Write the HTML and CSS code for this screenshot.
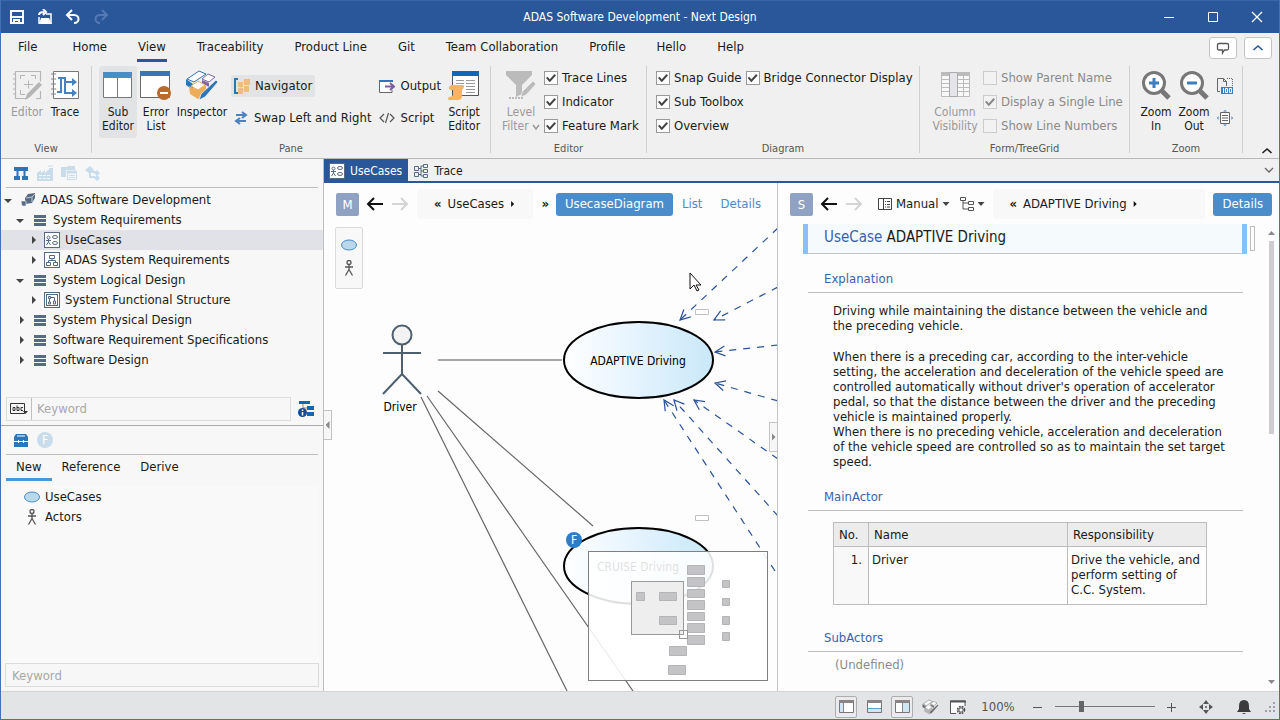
FILE: index.html
```html
<!DOCTYPE html>
<html lang="en">

<head>
    <meta charset="UTF-8">
    <title>ADAS Software Development - Next Design</title>
    <link rel="stylesheet" href="styles.css">
</head>

<body>
    <!-- shared icons -->
    <svg class="defs" width="0" height="0">
        <symbol id="i-layer" viewBox="0 0 16 16"><path d="M2 3h12v3H2zM2 7h12v3H2zM2 11h12v3H2z" fill="#566a84"/></symbol>
        <symbol id="i-usecase" viewBox="0 0 16 16"><rect x=".5" y=".5" width="15" height="15" fill="#fff" stroke="#566a84"/><circle cx="4.500" cy="5.500" r="1.500"/><path d="M2 8.500h5M4.500 7v3M2.500 13l2-3 2 3"/><ellipse cx="11" cy="5" rx="2.500" ry="1.500"/><ellipse cx="11" cy="11" rx="2.500" ry="1.500"/></symbol>
        <symbol id="i-org" viewBox="0 0 16 16"><rect x=".5" y=".5" width="15" height="15" fill="#fff" stroke="#566a84"/><path d="M5.500 3.500h5v3h-5zM2.500 10.500h4v3h-4zM9.500 10.500h4v3h-4zM8 6.500v2M4.500 10.500v-2h7v2"/></symbol>
        <symbol id="i-struct" viewBox="0 0 16 16"><rect x=".5" y=".5" width="15" height="15" fill="#fff" stroke="#566a84"/><rect x="2.500" y="2.500" width="11" height="11"/><path d="M4.500 4.500h2v2h-2zM4.500 10h2v2h-2zM9.500 9h2v3h-2zM5.500 6.500V10M6.500 5.500h4V9"/></symbol>
        <symbol id="i-actor" viewBox="0 0 16 16"><circle cx="8" cy="2.500" r="2"/><path d="M8 4.500v5M4 7h8M4.500 15.500L8 9.500l3.500 6"/></symbol>
        <symbol id="i-oval" viewBox="0 0 16 16"><ellipse cx="8" cy="8" rx="7.500" ry="5" fill="#b9d9eb" stroke="#4a8bc8"/></symbol>
        <symbol id="i-back" viewBox="0 0 18 14"><path d="M17 7H2M8 1L2 7l6 6" stroke-width="2"/></symbol>
        <symbol id="i-fwd" viewBox="0 0 18 14"><path d="M1 7h15M10 1l6 6-6 6" stroke-width="2"/></symbol>
        <symbol id="i-inspect" viewBox="0 0 32 32">
            <path d="M0 10v6l7 5v-6z" fill="#2e75b6"/>
            <path d="M1 10L13 2l7 3L8 13z" fill="#fff" stroke="#2e75b6"/>
            <path d="M16 10l6-5 7 3-6 5z" fill="#fff" stroke="#8064a2"/><path d="M16 11l7 3v4l-7-4z" fill="#8064a2"/>
            <path d="M3 17l9 4v9l-8-5zM12 21l8-5v8l-8 6z" fill="#edac57"/><path d="M5 17l7-5 7 4-7 5z" fill="#fff" stroke="#edac57"/>
            <path d="M30 11l2 2-13 15-6 3 2-6z" fill="#2e75b6" stroke="#f0f0f0" stroke-width=".8"/>
        </symbol>
    </svg>

    <header class="titlebar">
        <div class="quick">
            <button aria-label="Save"><svg width="16" height="16" fill="none" stroke="#fff" stroke-width="2"><path d="M2 2h12v12H2zM3 8h10M5 14v-3h5v3"/></svg></button>
            <button aria-label="Open"><svg width="16" height="16"><path d="M2 8v6h12V5H9" fill="none" stroke="#fff" stroke-width="1.500"/><path d="M4 9h8l3 6H2z" fill="#fff"/><path d="M2 6c0-2 2-3 5-3M6 0l3 3-3 3" fill="none" stroke="#fff" stroke-width="2"/></svg></button>
            <button aria-label="Undo"><svg width="16" height="16" fill="none" stroke="#fff" stroke-width="2"><path d="M7 1L2 6l5 5M2 6h7c6 0 6 8 0 8"/></svg></button>
            <button aria-label="Redo" disabled><svg width="16" height="16" fill="none" stroke="#5579b5" stroke-width="2"><path d="M9 1l5 5-5 5M14 6H7C1 6 1 14 7 14"/></svg></button>
        </div>
        <h1>ADAS Software Development - Next Design</h1>
        <div class="window-buttons">
            <button aria-label="Minimize"><svg width="12" height="12"><path d="M1 6.500h10" stroke="#fff"/></svg></button>
            <button aria-label="Maximize"><svg width="12" height="12"><path d="M1.500 1.500h9v9h-9z" fill="none" stroke="#fff"/></svg></button>
            <button aria-label="Close"><svg width="12" height="12"><path d="M1 1l10 10M11 1L1 11" stroke="#fff" stroke-width="1.300"/></svg></button>
        </div>
    </header>

    <nav class="menu">
        <a href="#">File</a>
        <a href="#">Home</a>
        <a href="#" class="on">View</a>
        <a href="#">Traceability</a>
        <a href="#">Product Line</a>
        <a href="#">Git</a>
        <a href="#">Team Collaboration</a>
        <a href="#">Profile</a>
        <a href="#">Hello</a>
        <a href="#">Help</a>
        <div class="menu-tools">
            <button aria-label="Feedback"><svg width="14" height="14" fill="none" stroke="#555" stroke-width="1.300"><path d="M3 2.500h8q1.500 0 1.500 1.500v3.500q0 1.500-1.500 1.500H8.500L6.500 12V9H3Q1.500 9 1.500 7.500V4q0-1.500 1.500-1.500z"/></svg></button>
            <button aria-label="Hide ribbon"><svg width="12" height="12" fill="none" stroke="#2a579a" stroke-width="1.600"><path d="M1.500 8L6 4l4.500 4"/></svg></button>
        </div>
    </nav>

    <div class="ribbon">
        <section class="group">
            <div class="tools">
                <button class="big" disabled>
                    <svg width="32" height="32" viewBox="1 0 32 32" fill="none" stroke="#b5b5b5">
                        <path d="M5.500 2.500h25v10M5.500 2.500v27h12M30.500 22v7.500H26" stroke-width="1.200"/><path d="M3 5h4M3 10h4M3 15h4M3 20h4M3 25h4" stroke-dasharray="3 1"/>
                        <path d="M10.500 10V6.500H15M21 6.500h4.500V10M10.500 21v4.500H15M18.500 11.500v8M14 15.500h9"/>
                        <path d="M29 13l3 3-12 12-5 3 2-6z" fill="#b5b5b5" stroke="none"/>
                    </svg>
                    Editor
                </button>
                <button class="big">
                    <svg width="32" height="32" viewBox="1 0 32 32" fill="none">
                        <path d="M5.500 2.500h25v27h-25z" fill="#fff" stroke="#777"/><path d="M3 5h5M3 10h5M3 15h5M3 20h5M3 25h5" stroke="#888"/>
                        <path d="M10 9h7v15h11M9 23h4V9M17 13h11" stroke="#4682c0" stroke-width="2"/>
                        <path d="M24 9l5 4-5 4zM24 20l5 4-5 4z" fill="#4682c0"/>
                    </svg>
                    Trace
                </button>
            </div>
            <h2>View</h2>
        </section>

        <section class="group pane">
            <div class="tools">
                <button class="big on">
                    <svg width="32" height="32"><path d="M1.500 5.500h28v23h-28z" fill="#fff" stroke="#777"/><path d="M15.500 8v20" stroke="#777"/><path d="M1 3h29v6H1z" fill="#4a8bc8"/></svg>
                    Sub<br>Editor
                </button>
                <button class="big">
                    <svg width="32" height="32"><path d="M.5 2.500h29v26H.5z" fill="#fff" stroke="#666"/><path d="M0 2h30v5H0z" fill="#3a74b4"/><circle cx="24" cy="24" r="7" fill="#b96a2d"/><path d="M20 24h8" stroke="#fff" stroke-width="2"/></svg>
                    Error<br>List
                </button>
                <button class="big wide">
                    <svg width="34" height="32"><use href="#i-inspect" width="34" height="32"/></svg>
                    Inspector
                </button>
                <div class="rows">
                    <button class="small on"><svg width="17" height="16"><path d="M5 1H2v14h3" fill="none" stroke="#2e75b6" stroke-width="2"/><path d="M11 1h6v6h-6zM5 4h5v5H5zM11 8h5v6h-5zM5 10h5v6H5z" fill="#ebbf80"/><path d="M10 4h2M8 9v3h3" fill="none" stroke="#ebbf80"/></svg>Navigator</button>
                    <button class="small"><svg width="16" height="16" fill="none" stroke="#4a82c0" stroke-width="2"><path d="M3 5h10M9 2l4 3-4 3M13 11H3M7 8l-4 3 4 3"/></svg>Swap Left and Right</button>
                </div>
                <div class="rows">
                    <button class="small"><svg width="16" height="16" fill="none"><path d="M13 4V2.500H.5v12H13V12" fill="#fff" stroke="#666"/><path d="M0 3h14" stroke="#2e75b6" stroke-width="2"/><path d="M6 8.500h8M11 5l4 3.500-4 3.500" stroke="#7b5fa3" stroke-width="2"/></svg>Output</button>
                    <button class="small"><svg width="16" height="16" fill="none" stroke="#555" stroke-width="1.200"><path d="M5 4L1 8l4 4M11 4l4 4-4 4M9.500 3l-3 10"/></svg>Script</button>
                </div>
                <button class="big">
                    <svg width="32" height="32"><path d="M4.500 2.500h26v24h-26z" fill="#fff" stroke="#555"/><path d="M4 2h27v5H4z" fill="#0f67b5"/><path d="M8 11.500h8M8 14.500h8M8 17.500h8M18 11.500h9M18 14.500h9M18 17.500h9M18 20.500h9M18 23.500h9" stroke="#999"/><path d="M3 16h12q2 3-1 5v6q0 4-4 4H1q-2-2 0-3l4-1v-6q-5 0-4-3z" fill="#fbb45c"/></svg>
                    Script<br>Editor
                </button>
            </div>
            <h2>Pane</h2>
        </section>

        <section class="group filter">
            <div class="tools">
                <button class="big" disabled>
                    <svg width="32" height="32"><path d="M1 2h26v4L17 16v9l-6 3V16L1 6z" fill="#bbb"/><path d="M28 12l3 3-10 11-5 2 1-5z" fill="#bbb" stroke="#f0f0f0" stroke-width=".7"/><path d="M4 29h14" stroke="#bbb" stroke-width="2" stroke-dasharray="2 1"/></svg>
                    Level<br><span>Filter <svg width="8" height="6" fill="none" stroke="#999" stroke-width="1.500"><path d="M1 1l3 4 3-4"/></svg></span>
                </button>
                <div class="checks">
                    <label><input type="checkbox" checked>Trace Lines</label>
                    <label><input type="checkbox" checked>Indicator</label>
                    <label><input type="checkbox" checked>Feature Mark</label>
                </div>
            </div>
            <h2>Editor</h2>
        </section>

        <section class="group diagram">
            <div class="tools">
                <div class="checks">
                    <label><input type="checkbox" checked>Snap Guide</label>
                    <label><input type="checkbox" checked>Sub Toolbox</label>
                    <label><input type="checkbox" checked>Overview</label>
                </div>
                <div class="checks">
                    <label><input type="checkbox" checked>Bridge Connector Display</label>
                </div>
            </div>
            <h2>Diagram</h2>
        </section>

        <section class="group form">
            <div class="tools">
                <button class="big wide" disabled>
                    <svg width="32" height="32" fill="none" stroke="#bbb"><path d="M2.500 3.500h28v24h-28z" fill="#f8f8f8"/><path d="M2 5h29" stroke-width="4"/><path d="M2 10.500h29M2 14.500h29M2 18.500h29M2 22.500h29"/><path d="M10.500 3.500h8v24h-8z" fill="#e4e4ea" stroke="#aaa"/><path d="M24.500 4v23"/></svg>
                    Column<br>Visibility
                </button>
                <div class="checks">
                    <label class="off"><input type="checkbox" disabled>Show Parent Name</label>
                    <label class="off"><input type="checkbox" checked disabled>Display a Single Line</label>
                    <label class="off"><input type="checkbox" disabled>Show Line Numbers</label>
                </div>
            </div>
            <h2>Form/TreeGrid</h2>
        </section>

        <section class="group zoom">
            <div class="tools">
                <button class="big">
                    <svg width="32" height="32" fill="none" stroke="#777"><circle cx="14" cy="14" r="10.500" fill="#fff" stroke-width="3"/><path d="M22 22l7 7" stroke-width="5"/><path d="M9 14h10M14 9v10" stroke="#3c7ebf" stroke-width="3"/></svg>
                    Zoom<br>In
                </button>
                <button class="big">
                    <svg width="32" height="32" fill="none" stroke="#777"><circle cx="14" cy="14" r="10.500" fill="#fff" stroke-width="3"/><path d="M22 22l7 7" stroke-width="5"/><path d="M9 14h10" stroke="#3c7ebf" stroke-width="3"/></svg>
                    Zoom<br>Out
                </button>
                <div class="rows">
                    <button class="small" aria-label="Zoom 100%"><svg width="16" height="16" fill="none" stroke="#666"><path d="M3 13.500H.5V.5h6l3 3V8M6.500.5v3h3"/><path d="M10 .5h5.500V9" stroke-dasharray="1 1"/><path d="M4 9h12v7H4z" fill="#3c7ebf" stroke="none"/><path d="M6.500 10v5M8.500 10.500h2v4h-2zM12.500 10.500h2v4h-2z" stroke="#fff"/></svg></button>
                    <button class="small" aria-label="Fit to window"><svg width="16" height="16" fill="none" stroke="#666"><path d="M3.500 2.500h9v11h-9z" fill="#fff"/><path d="M5 5.500h6M5 8h6M5 10.500h6"/><path d="M6 1.500L8 0l2 1.500zM6 14.500L8 16l2-1.500zM1.500 6L0 8l1.500 2zM14.500 6L16 8l-1.500 2z" fill="#3c7ebf" stroke="none"/></svg></button>
                </div>
            </div>
            <h2>Zoom</h2>
        </section>
        <button class="collapse" aria-label="Collapse the ribbon"><svg width="12" height="8" fill="none" stroke="#222" stroke-width="1.600"><path d="M1.500 6L6 2l4.500 4"/></svg></button>
    </div>

    <div class="work">
        <aside class="sidebar">
            <div class="navigator">
                <div class="icon-bar">
                    <svg width="16" height="16" fill="#2e75b6"><path d="M1 2h14v4H1zM1 11h6v4H1zM9 11h6v4H9z"/><path d="M4.500 5v7M11.500 5v7" stroke="#2e75b6" stroke-width="2"/></svg>
                    <svg width="16" height="16" fill="#c9dcea"><path d="M0 8l4-3v3l4-3v3l3-3h1V3h4v13H0z"/><path d="M11 1h5" stroke="#c9dcea"/><path d="M2 10.500h12M2 13.500h12" stroke="#f7f7f7" stroke-dasharray="3 1"/></svg>
                    <svg width="16" height="16" fill="#c9dcea"><path d="M0 2h6l1-1h7v4H5v7H0z"/><path d="M6.500 6.500h9v8h-9z" fill="#f7f7f7" stroke="#c9dcea"/><path d="M6 6h10v2H6zM8 10.500h6M8 12.500h6" stroke="#c9dcea"/></svg>
                    <svg width="16" height="16" fill="#c9dcea"><path d="M5 1l4 4-4 4-5-4zM12 5l3 3-3 3-3-3zM12 10l3 3-3 3-3-3z"/><path d="M5 8v4h5M7 7h4" fill="none" stroke="#c9dcea" stroke-width="2"/></svg>
                </div>
                <ul class="tree">
                    <li class="open"><i></i><svg width="16" height="16" fill="#566a84"><path d="M5 6l3-4 7-1v5l-3 5-7 1z"/><path d="M1 9h5v5H2z" stroke="#f7f7f7" stroke-width=".6"/><path d="M6 6l6-1 3-3M12 5v5" stroke="#c5ccd6" fill="none"/></svg>ADAS Software Development</li>
                    <li class="l1 open"><i></i><svg width="16" height="16"><use href="#i-layer"/></svg>System Requirements</li>
                    <li class="l2 selected"><i></i><svg class="line" width="16" height="16"><use href="#i-usecase"/></svg>UseCases</li>
                    <li class="l2"><i></i><svg class="line" width="16" height="16"><use href="#i-org"/></svg>ADAS System Requirements</li>
                    <li class="l1 open"><i></i><svg width="16" height="16"><use href="#i-layer"/></svg>System Logical Design</li>
                    <li class="l2"><i></i><svg class="line" width="16" height="16"><use href="#i-struct"/></svg>System Functional Structure</li>
                    <li class="l1"><i></i><svg width="16" height="16"><use href="#i-layer"/></svg>System Physical Design</li>
                    <li class="l1"><i></i><svg width="16" height="16"><use href="#i-layer"/></svg>Software Requirement Specifications</li>
                    <li class="l1"><i></i><svg width="16" height="16"><use href="#i-layer"/></svg>Software Design</li>
                </ul>
                <div class="search">
                    <div class="field">
                        <button aria-label="Search options"><svg width="18" height="12" fill="none" stroke="#333"><path d="M.5.500h14v10H.5z"/><path d="M3 4.500h2v3H3zM7 2.500v5h2v-3H7M13 4.500h-2v3h2"/><path d="M13 8h5l-2.500 3z" fill="#333" stroke="none"/></svg></button>
                        <input type="text" placeholder="Keyword" aria-label="Keyword in models">
                    </div>
                    <button aria-label="Show details"><svg width="16" height="16"><path d="M1 0h11v3H1zM9 5h7v4H9zM9 11h7v4H9z" fill="#0f67b5"/><path d="M5 3v4h4" stroke="#888" fill="none"/><circle cx="4.500" cy="11.500" r="4.500" fill="#134b96"/><path d="M4.500 8.500v1.500M4.500 11v3.500" stroke="#fff" stroke-width="1.500"/></svg></button>
                </div>
            </div>
            <div class="toolbox">
                <div class="icon-bar">
                    <svg width="16" height="16"><path d="M3 2h10l2 3v10H1V5z" fill="#2e75b6"/><path d="M4 4h8M1 9.500h4M6 9.500h4M11 9.500h4M5.500 8v3M10.500 8v3" stroke="#fff"/></svg>
                    <span class="feature pale">F</span>
                </div>
                <nav class="tabs"><a href="#" class="on">New</a><a href="#">Reference</a><a href="#">Derive</a></nav>
                <ul class="items">
                    <li><svg width="16" height="16"><use href="#i-oval"/></svg>UseCases</li>
                    <li><svg class="man" width="16" height="16"><use href="#i-actor"/></svg>Actors</li>
                </ul>
                <input class="filter-box" type="text" placeholder="Keyword" aria-label="Keyword in toolbox">
            </div>
        </aside>

        <main class="editor">
            <div class="doc-tabs">
                <a href="#" class="on"><svg class="line" width="16" height="16"><use href="#i-usecase"/></svg>UseCases</a>
                <a href="#"><svg class="line" width="16" height="16"><path d="M1.500 3.500h4v4h-4zM1.500 9.500h4v4h-4zM10.500 1.500h4v3h-4zM10.500 6.500h4v3h-4zM10.500 11.500h4v3h-4zM5.500 5.500H8M5.500 11.500H8M10.500 3H8v10h2.500M8 8h2.500"/></svg>Trace</a>
                <button aria-label="All tabs"><svg width="10" height="8" fill="none" stroke="#666" stroke-width="1.300"><path d="M1 2l4 4 4-4"/></svg></button>
            </div>
            <div class="panes">
                <section class="main-pane">
                    <div class="bar">
                        <span class="badge">M</span>
                        <button aria-label="Back"><svg class="go" width="18" height="14"><use href="#i-back"/></svg></button>
                        <button aria-label="Forward" disabled><svg class="go no" width="18" height="14"><use href="#i-fwd"/></svg></button>
                        <div class="crumb"><b>«</b>UseCases<b class="tri"></b></div>
                        <b>»</b>
                        <div class="views">
                            <button class="primary">UsecaseDiagram</button>
                            <button class="link">List</button>
                            <button class="link">Details</button>
                        </div>
                    </div>
                    <div class="canvas">
                        <svg class="diagram-svg" width="100%" height="100%">
                            <defs>
                                <linearGradient id="fill"><stop offset="0" stop-color="#fff"/><stop offset=".5" stop-color="#e4f3fe"/><stop offset="1" stop-color="#c9e8f8"/></linearGradient>
                                <marker id="arrow" markerUnits="userSpaceOnUse" markerWidth="14" markerHeight="14" refX="12" refY="7" orient="auto"><path d="M2 2l10 5-10 5" fill="none" stroke="#2a5298" stroke-width="1.200"/></marker>
                            </defs>
                            <g class="assoc">
                                <path d="M114 138h124" class="soft"/>
                                <path d="M114 169l155 135M103 174l206 295M97 175l146 294"/>
                            </g>
                            <g class="trace">
                                <path d="M454 6L356 98"/>
                                <path d="M454 65l-64 33"/>
                                <path d="M454 123l-63 7"/>
                                <path d="M454 179l-63-18"/>
                                <path d="M454 237l-84-59"/>
                                <path d="M454 294L350 178"/>
                                <path d="M451 349L340 178"/>
                            </g>
                            <g class="driver">
                                <circle cx="78" cy="113" r="9.500"/>
                                <path d="M78 123v29M59 131h38M59 172l19-20 19 20"/>
                            </g>
                            <text x="76" y="189">Driver</text>
                            <ellipse cx="314.500" cy="138" rx="74.500" ry="38"/>
                            <text x="314" y="143">ADAPTIVE Driving</text>
                            <ellipse cx="314.500" cy="344" rx="74.500" ry="38"/>
                            <text x="314" y="349">CRUISE Driving</text>
                            <path class="stub" d="M371.500 87.500h13v5h-13zM371.500 293.500h13v5h-13z"/>
                        </svg>
                        <div class="palette">
                            <svg width="16" height="16"><use href="#i-oval"/></svg>
                            <svg class="man" width="16" height="16"><use href="#i-actor"/></svg>
                        </div>
                        <span class="feature mark">F</span>
                        <svg class="overview" viewBox="1 1 178 128">
                            <rect x="43.500" y="30.500" width="52" height="53" fill="#eee" stroke="#999"/>
                            <g class="blocks">
                                <path d="M48.500 41.500h8v8h-8zM71.500 41.500h17v8h-17zM71.500 65.500h17v8h-17z"/>
                                <path d="M99.500 14.500h17v9h-17zM99.500 26.500h17v9h-17zM99.500 38.500h17v8h-17zM99.500 49.500h17v9h-17zM99.500 61.500h17v8h-17zM99.500 72.500h17v9h-17zM99.500 84.500h17v9h-17z"/>
                                <path d="M81.500 95.500h17v9h-17zM80.500 114.500h17v9h-17z"/>
                                <path d="M134.500 29.500h7v7h-7zM134.500 47.500h7v7h-7zM134.500 65.500h7v8h-7zM134.500 81.500h7v8h-7z"/>
                            </g>
                            <rect x="91.500" y="79.500" width="8" height="8" fill="none" stroke="#999"/>
                        </svg>
                        <svg class="cursor" width="14" height="20"><path d="M1 1v16l4-4 3 6 2-1-3-5h5z" fill="#fff" stroke="#111"/></svg>
                    </div>
                    <button class="grip left" aria-label="Hide navigator"></button>
                    <button class="grip right" aria-label="Hide sub editor"></button>
                </section>

                <section class="sub-pane">
                    <div class="bar">
                        <span class="badge">S</span>
                        <button aria-label="Back"><svg class="go" width="18" height="14"><use href="#i-back"/></svg></button>
                        <button aria-label="Forward" disabled><svg class="go no" width="18" height="14"><use href="#i-fwd"/></svg></button>
                        <button class="drop manual"><svg width="14" height="14" fill="none" stroke="#444"><path d="M.5 1.500h13v11H.5zM5.500 1.500v11M7 4.500h1M9 4.500h3M7 7.500h1M9 7.500h3M7 10h1M9 10h3"/></svg>Manual<i></i></button>
                        <button class="drop" aria-label="Layout"><svg width="14" height="14" fill="none" stroke="#555"><path d="M.5.500h5v3h-5zM8.500 4.500h5v3h-5zM8.500 10.500h5v3h-5zM3 3.500v8.500h5.500M3 6h5.500"/></svg><i></i></button>
                        <div class="crumb"><b>«</b>ADAPTIVE Driving<b class="tri"></b></div>
                        <button class="primary">Details</button>
                    </div>
                    <div class="scroll">
                        <article class="form-view">
                            <h2><span>UseCase</span> ADAPTIVE Driving</h2>
                            <h3>Explanation</h3>
                            <div class="text">
                                <p>Driving while maintaining the distance between the vehicle and the preceding vehicle.</p>
                                <p>When there is a preceding car, according to the inter-vehicle setting, the acceleration and deceleration of the vehicle speed are controlled automatically without driver's operation of accelerator pedal, so that the distance between the driver and the preceding vehicle is maintained properly.<br>When there is no preceding vehicle, acceleration and deceleration of the vehicle speed are controlled so as to maintain the set target speed.</p>
                            </div>
                            <h3>MainActor</h3>
                            <table>
                                <thead>
                                    <tr><th class="no">No.</th><th>Name</th><th class="resp">Responsibility</th></tr>
                                </thead>
                                <tbody>
                                    <tr><td class="no">1.</td><td>Driver</td><td>Drive the vehicle, and perform setting of C.C. System.</td></tr>
                                </tbody>
                            </table>
                            <h3>SubActors</h3>
                            <p class="undefined">(Undefined)</p>
                        </article>
                        <div class="mark-column"></div>
                        <div class="scrollbar"><i class="up"></i><div class="track"><div class="thumb"></div></div><i class="down"></i></div>
                    </div>
                </section>
            </div>
        </main>
    </div>

    <footer class="status">
        <button class="on" aria-label="Navigator"><svg width="15" height="13"><path d="M.5.500h14v12H.5z" fill="#fff" stroke="#777"/><path d="M1 3h3v9H1z" fill="#cfe6f5"/><path d="M0 1.500h15" stroke="#8a8486" stroke-width="3"/><path d="M4.500 3v9" stroke="#8a8486"/></svg></button>
        <button aria-label="Output pane"><svg width="15" height="13"><path d="M.5.500h14v12H.5z" fill="#fff" stroke="#777"/><path d="M1 8h13v4H1z" fill="#cfe6f5"/><path d="M0 1.500h15" stroke="#8a8486" stroke-width="3"/><path d="M1 8.500h13" stroke="#5aa0c8"/></svg></button>
        <button class="on" aria-label="Sub editor"><svg width="15" height="13"><path d="M.5.500h14v12H.5z" fill="#fff" stroke="#777"/><path d="M8 3h6v9H8z" fill="#cfe6f5"/><path d="M0 1.500h15" stroke="#8a8486" stroke-width="3"/><path d="M7.500 3v9" stroke="#8a8486"/></svg></button>
        <button class="grey" aria-label="Inspector"><svg width="17" height="16"><use href="#i-inspect" width="17" height="16"/></svg></button>
        <button aria-label="Options"><svg width="16" height="14" fill="none"><path d="M6 13.500H.5V1H15v5" fill="#fff" stroke="#555"/><path d="M0 1.500h16" stroke="#555" stroke-width="2"/><circle cx="11" cy="10" r="3.500" fill="#fff" stroke="#444" stroke-width="1.500" stroke-dasharray="1.800 1"/><circle cx="11" cy="10" r="2.200" stroke="#444"/></svg></button>
        <output>100%</output>
        <button aria-label="Zoom out"><svg width="12" height="12"><path d="M1 6.500h9" stroke="#555"/></svg></button>
        <input type="range" min="0" max="100" value="25" aria-label="Zoom">
        <button aria-label="Zoom in"><svg width="12" height="12"><path d="M1 6.500h9M5.500 2v9" stroke="#555"/></svg></button>
        <button class="fit" aria-label="Fit"><svg width="16" height="16" fill="#555"><path d="M8 1l3 4H5zM8 15l3-4H5zM1 8l4-3v6zM15 8l-4-3v6z"/><path d="M7 7h2v2H7z" fill="#777"/></svg></button>
        <button class="bell" aria-label="Notifications"><svg width="14" height="16" fill="#3c3c3c"><path d="M7 1q5 0 5 6v3l2 3H0l2-3V7q0-6 5-6zM5 14h4q-2 2-4 0z"/></svg></button>
        <svg class="size" width="12" height="12" fill="#a0a0a8"><path d="M9 1h2v2H9zM5 5h2v2H5zM9 5h2v2H9zM1 9h2v2H1zM5 9h2v2H5zM9 9h2v2H9z"/></svg>
    </footer>
</body>

</html>
```
FILE: styles.css
```css
* {
    box-sizing: border-box;
    margin: 0;
    padding: 0;
}

body {
    display: flex;
    flex-direction: column;
    height: 100vh;
    overflow: hidden;
    border: 1px solid #4472b4;
    border-top: 0;
    background: #f0f0f0;
    color: #1a1a1a;
    font: 13px/20px "DejaVu Sans Condensed", "DejaVu Sans", "Noto Sans", sans-serif;
    font-stretch: condensed;
}

svg {
    flex: none;
}

.defs {
    position: absolute;
}

button, input {
    border: 0;
    background: none;
    color: inherit;
    font: inherit;
}

a {
    color: inherit;
    text-decoration: none;
}

ul {
    list-style: none;
}

h1, h2, h3 {
    font-size: 13px;
    font-weight: normal;
}

.line {
    fill: none;
    stroke: #566a84;
}

.man {
    fill: none;
    stroke: #555;
    stroke-width: 1.3px;
}

/* title bar */
.titlebar {
    display: grid;
    grid-template-columns: 1fr auto 1fr;
    align-items: center;
    height: 33px;
    flex: none;
    border-top: 1px solid #3a66a8;
    background: #2a579a;
    color: #fff;
}

.titlebar h1 {
    font-size: 12px;
}

.quick {
    display: flex;
    gap: 12px;
    padding-left: 8px;
}

.quick svg, .window-buttons svg, .menu-tools svg {
    display: block;
}

.window-buttons {
    display: flex;
    justify-content: flex-end;
    gap: 32px;
    padding-right: 16px;
}

/* menu */
.menu {
    display: flex;
    gap: 29px;
    height: 32px;
    flex: none;
    padding-left: 16px;
}

.menu a {
    height: 29px;
    padding: 0 1px;
    line-height: 28px;
}

.menu a:first-child {
    margin-right: 4px;
}

.menu a.on {
    border-bottom: 3px solid #2a579a;
}

.menu-tools {
    display: flex;
    gap: 7px;
    margin-left: auto;
    padding: 4px 7px 0 0;
}

.menu-tools button {
    display: flex;
    align-items: center;
    justify-content: center;
    width: 28px;
    height: 22px;
    border: 1px solid #c4c4c4;
    border-radius: 3px;
    background: #fff;
}

/* ribbon */
.ribbon {
    display: flex;
    height: 94px;
    flex: none;
    border-bottom: 1px solid #b8b8b8;
}

.group {
    display: flex;
    flex-direction: column;
    margin: 1px 0 5px;
    padding: 0 7px;
    border-right: 1px solid #d0d0d0;
}

.group h2 {
    color: #555;
    font-size: 11px;
    line-height: 8px;
    text-align: center;
}

.tools {
    display: flex;
    flex: 1;
}

.pane {
    width: 399px;
}

.filter {
    width: 156px;
}

.diagram {
    width: 273px;
}

.form {
    width: 210px;
}

.zoom {
    width: 113px;
}

.big {
    display: flex;
    flex-direction: column;
    align-items: center;
    width: 38px;
    height: 72px;
    flex: none;
    border-radius: 3px;
    font-size: 12px;
    line-height: 14px;
    white-space: nowrap;
}

.big > svg {
    margin: 3px 0 4px;
}

.big.wide {
    width: 54px;
}

.big:disabled {
    color: #999;
}

.group .on {
    background: #e2e3e5;
}

.rows {
    display: flex;
    flex-direction: column;
    align-items: flex-start;
    gap: 10px;
    padding: 9px 1px 0 2px;
}

.small {
    display: flex;
    align-items: center;
    gap: 5px;
    height: 22px;
    padding: 0 3px 0 2px;
    border-radius: 2px;
    white-space: nowrap;
}

.filter .big {
    width: 46px;
}

.form .big {
    width: 56px;
}

.checks {
    display: flex;
    flex-direction: column;
    gap: 4px;
    padding-top: 2px;
}

.diagram .checks {
    padding-left: 2px;
}

.checks label {
    display: flex;
    align-items: center;
    gap: 4px;
    white-space: nowrap;
}

.checks input {
    appearance: none;
    width: 14px;
    height: 14px;
    border: 1px solid #999;
    background: #fff;
}

.checks input:checked::before {
    content: "";
    display: block;
    width: 10px;
    height: 10px;
    margin: 1px;
    background: #444;
    clip-path: polygon(0 50%, 15% 38%, 38% 62%, 85% 10%, 100% 25%, 38% 92%);
}

.checks .off {
    color: #8a8a8a;
}

.checks .off input {
    border-color: #ccc;
    background: #f2f2f2;
}

.checks .off input::before {
    background: #888;
}

.collapse {
    align-self: flex-end;
    margin: 0 6px 0 auto;
}

.collapse svg {
    display: block;
    margin-bottom: 3px;
}

/* work area */
.work {
    display: flex;
    flex: 1;
    min-height: 0;
}

.sidebar {
    display: flex;
    flex-direction: column;
    width: 323px;
    flex: none;
    border-right: 1px solid #bdbdbd;
    background: #f7f7f7;
}

.navigator, .toolbox {
    display: flex;
    flex: 1;
    flex-direction: column;
}

.navigator {
    border-bottom: 1px solid #aaa;
}

.icon-bar {
    display: flex;
    align-items: center;
    gap: 8px;
    height: 29px;
    flex: none;
    margin: 0 5px;
    padding-left: 7px;
    border-bottom: 1px solid #bdbdbd;
}

.tree {
    flex: 1;
    padding-top: 2px;
}

.tree li {
    display: flex;
    align-items: center;
    gap: 5px;
    height: 20px;
}

.tree .l1 {
    padding-left: 12px;
}

.tree .l2 {
    padding-left: 24px;
}

.tree .selected {
    background: #e1e2e7;
}

.tree i {
    width: 14px;
    height: 8px;
    background: #444;
    clip-path: polygon(7px 0, 11px 4px, 7px 8px);
}

.tree .open i {
    clip-path: polygon(3px 3px, 11px 3px, 7px 7px);
}

.search {
    display: flex;
    align-items: center;
    gap: 7px;
    padding: 0 9px 4px 5px;
}

.search button {
    display: block;
    line-height: 0;
}

.field {
    display: flex;
    flex: 1;
    height: 24px;
    border: 1px solid #dcdcdc;
}

.field button {
    width: 25px;
    border-right: 1px solid #c0c0c0;
}

.field input {
    flex: 1;
    min-width: 0;
    padding: 0 5px;
}

::placeholder {
    color: #a8a8a8;
}

.feature {
    display: block;
    width: 16px;
    height: 16px;
    border-radius: 50%;
    background: #2a7dc8;
    color: #fff;
    font-size: 12px;
    line-height: 16px;
    text-align: center;
}

.feature.pale {
    background: #c9dcea;
}

.tabs {
    display: flex;
    gap: 20px;
    padding-left: 5px;
}

.tabs a {
    height: 26px;
    line-height: 24px;
}

.tabs .on {
    margin-right: -10px;
    padding: 0 10px;
    border-bottom: 3px solid #4a97d6;
}

.items {
    flex: 1;
    margin: 4px 4px 0;
    padding: 2px 0 0 19px;
    background: #f9f9f9;
}

.items li {
    display: flex;
    align-items: center;
    gap: 5px;
}

.filter-box {
    height: 24px;
    margin: 0 4px 4px;
    padding: 0 6px;
    border: 1px solid #dcdcdc;
}

.editor {
    display: flex;
    flex: 1;
    flex-direction: column;
    min-width: 0;
}

.doc-tabs {
    display: flex;
    height: 24px;
    flex: none;
    border-bottom: 2px solid #2a579a;
    font-size: 12px;
}

.doc-tabs a {
    display: flex;
    align-items: center;
    gap: 5px;
    padding: 2px 6px 0 5px;
}

.doc-tabs .on {
    background: #2a579a;
    color: #fff;
}

.doc-tabs button {
    margin: 0 5px 0 auto;
}

.panes {
    display: flex;
    flex: 1;
    min-height: 0;
    background: #fdfdfe;
}

.main-pane {
    display: flex;
    flex: 453;
    flex-direction: column;
    position: relative;
    min-width: 0;
    border-right: 1px solid #c4c4c4;
}

.sub-pane {
    display: flex;
    flex: 501;
    flex-direction: column;
    min-width: 0;
}

.bar {
    display: flex;
    align-items: center;
    gap: 7px;
    height: 39px;
    flex: none;
    padding: 3px 7px 0 12px;
    white-space: nowrap;
}

.bar button {
    display: flex;
    align-items: center;
}

.bar b {
    font-weight: bold;
}

.badge {
    width: 23px;
    height: 23px;
    border-radius: 2px;
    background: #8fa2c3;
    color: #fff;
    line-height: 23px;
    text-align: center;
}

.go {
    fill: none;
    stroke: #111;
}

.go.no {
    stroke: #d4d4d4;
}

.crumb {
    display: flex;
    align-items: center;
    gap: 6px;
    height: 30px;
    flex: 1;
    margin: 0 1px;
    padding-left: 17px;
    border-radius: 4px;
    background: #f8f8f8;
}

.crumb .tri {
    width: 5px;
    height: 6px;
    background: #111;
    clip-path: polygon(1px 0, 4px 3px, 1px 6px);
}

.views {
    display: flex;
}

.views .link {
    padding: 0 9px;
    color: #4a8bc8;
}

.bar .primary {
    height: 23px;
    padding: 0 9px;
    border-radius: 3px;
    background: #4a8dca;
    color: #fff;
}

.drop {
    gap: 4px;
}

.drop i {
    width: 7px;
    height: 4px;
    background: #444;
    clip-path: polygon(0 0, 100% 0, 50% 100%);
}

.manual {
    margin: 0 3px 0 8px;
}

/* diagram */
.canvas {
    position: relative;
    flex: 1;
    min-height: 0;
    overflow: hidden;
}

.diagram-svg {
    display: block;
}

.assoc path {
    fill: none;
    stroke: #666;
    stroke-width: 1.2px;
}

.assoc .soft {
    stroke: #a8a8a8;
    stroke-width: 2px;
}

.trace path {
    fill: none;
    stroke: #2a5298;
    stroke-width: 1.2px;
    stroke-dasharray: 7 7;
    marker-end: url(#arrow);
}

.driver {
    fill: #f3f3f3;
    stroke: #4e6070;
    stroke-width: 2px;
}

.driver path {
    fill: none;
}

.diagram-svg ellipse {
    fill: url(#fill);
    stroke: #000;
    stroke-width: 2px;
}

.diagram-svg text {
    font-size: 12px;
    text-anchor: middle;
}

.stub {
    fill: #fff;
    stroke: #c0c0c0;
}

.palette {
    display: flex;
    flex-direction: column;
    align-items: center;
    gap: 7px;
    position: absolute;
    left: 11px;
    top: 5px;
    width: 28px;
    height: 62px;
    padding-top: 9px;
    border: 1px solid #dcdcdc;
    border-radius: 2px;
    background: #f8f8f8;
}

.mark {
    position: absolute;
    left: 242px;
    top: 310px;
}

.overview {
    position: absolute;
    right: 9px;
    bottom: 10px;
    width: 180px;
    height: 130px;
    border: 1px solid #808080;
    background: rgba(255, 255, 255, 0.88);
}

.blocks {
    fill: #c4c4c6;
    stroke: #b4b4b6;
}

.cursor {
    position: absolute;
    left: 365px;
    top: 50px;
}

.grip {
    position: absolute;
    width: 8px;
    height: 30px;
    border: 1px solid #c4c4c4;
    background: #f7f7f7;
}

.grip::before {
    content: "";
    display: block;
    width: 4px;
    height: 8px;
    margin: auto;
    background: #888;
    clip-path: polygon(0 50%, 100% 0, 100% 100%);
}

.grip.left {
    left: 0;
    top: 227px;
    border-left: 0;
}

.grip.right {
    right: 0;
    top: 239px;
    border-right: 0;
}

.grip.right::before {
    clip-path: polygon(0 0, 100% 50%, 0 100%);
}

/* form */
.scroll {
    display: flex;
    flex: 1;
    min-height: 0;
    padding-top: 2px;
    overflow: hidden;
}

.form-view {
    flex: 1;
    min-width: 0;
    padding: 0 4px 0 30px;
}

.form-view h2 {
    height: 30px;
    margin: 0 -4px 0 -5px;
    padding-left: 16px;
    border: 5px solid #85c1f7;
    border-width: 0 5px;
    background: #f5fafd;
    box-shadow: inset 0 -1px #c4c4c4;
    font-size: 15px;
    line-height: 26px;
}

.form-view h2 span, .form-view h3 {
    color: #3a62ab;
}

.form-view h3 {
    padding: 0 16px 3px;
    border-bottom: 1px solid #bdbdbd;
}

.form-view h2 + h3 {
    margin-top: 15px;
}

.text {
    padding: 10px 16px 18px 25px;
    line-height: 15px;
}

.text p + p {
    margin-top: 16px;
}

.form-view table {
    width: calc(100% - 61px);
    margin: 11px 0 23px 25px;
    border-collapse: collapse;
    table-layout: fixed;
    line-height: 15px;
}

.form-view th {
    height: 24px;
    padding: 0 5px;
    border: 1px solid #bdbdbd;
    background: #ececec;
    font-weight: normal;
    text-align: left;
}

.form-view td {
    padding: 5px 3px 7px;
    border: 1px solid #bdbdbd;
    vertical-align: top;
}

.form-view .no {
    width: 35px;
}

.form-view .resp {
    width: 139px;
}

.form-view td.no {
    padding-right: 6px;
    background: #f8f8f8;
    text-align: right;
}

.undefined {
    padding: 3px 27px;
    color: #8a8a8a;
}

.mark-column {
    width: 5px;
    height: 25px;
    margin: 2px 13px 0 3px;
    border: 1px solid #bdbdbd;
}

.scrollbar {
    display: flex;
    flex-direction: column;
    align-items: center;
    width: 7px;
    margin-right: 4px;
    padding: 7px 0 7px;
}

.scrollbar i {
    width: 7px;
    height: 4px;
    background: #888;
}

.up {
    clip-path: polygon(50% 0, 100% 100%, 0 100%);
}

.down {
    clip-path: polygon(0 0, 100% 0, 50% 100%);
}

.track {
    flex: 1;
    padding-top: 6px;
}

.thumb {
    width: 5px;
    height: 44%;
    background: #cdcdcd;
}

/* status bar */
.status {
    display: flex;
    align-items: center;
    justify-content: flex-end;
    gap: 6px;
    height: 28px;
    flex: none;
    padding: 2px 3px 0 0;
    border-top: 1px solid #d4d4d4;
    background: #e2e4e6;
    color: #555;
}

.status button {
    display: flex;
    align-items: center;
    justify-content: center;
    width: 22px;
    height: 22px;
}

.status .on {
    border: 1px solid #adadad;
    border-radius: 2px;
    background: #ebebec;
}

.grey {
    filter: grayscale(1);
}

.status output {
    width: 46px;
    text-align: center;
}

.status input {
    appearance: none;
    width: 100px;
    height: 12px;
    background: linear-gradient(#777, #777) center / 100% 1px no-repeat;
}

.status input::-webkit-slider-thumb {
    appearance: none;
    width: 5px;
    height: 11px;
    background: #666;
}

.status .fit {
    margin-left: 6px;
}

.status .bell {
    margin-left: 10px;
}

.status .size {
    margin-left: 3px;
}
```
